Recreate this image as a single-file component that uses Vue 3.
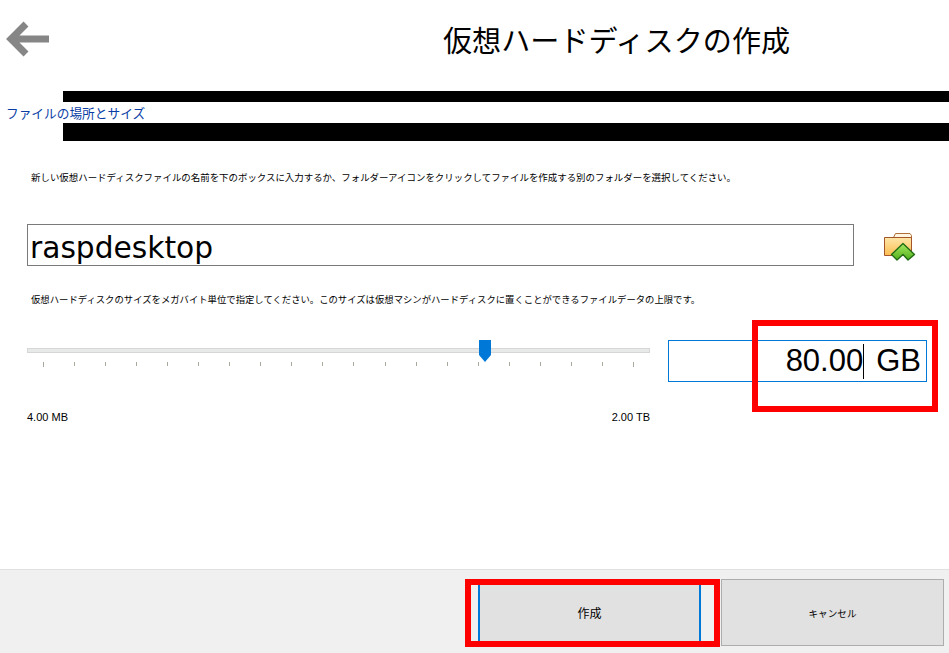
<template>
  <div class="page">
    <header class="head">
      <svg class="back" width="44" height="36" viewBox="0 0 44 36">
        <path d="M20 3 L5 18 L20 33 M6 18 H43" fill="none" stroke="#868686" stroke-width="7"/>
      </svg>
      <h1 class="title">仮想ハードディスクの作成</h1>
    </header>

    <section class="band">
      <div class="bar bar-top"></div>
      <div class="bar-gap"></div>
      <div class="bar bar-bottom"></div>
      <span class="band-label">ファイルの場所とサイズ</span>
    </section>

    <p class="desc first">新しい仮想ハードディスクファイルの名前を下のボックスに入力するか、フォルダーアイコンをクリックしてファイルを作成する別のフォルダーを選択してください。</p>

    <div class="file-row">
      <div class="file-input">raspdesktop</div>
      <svg class="folder" width="34" height="30" viewBox="0 0 34 30">
        <defs>
          <linearGradient id="folderFill" x1="0" y1="0" x2="0" y2="1">
            <stop offset="0" stop-color="#ffe6a8"/>
            <stop offset="1" stop-color="#fbbd52"/>
          </linearGradient>
          <linearGradient id="arrowFill" x1="0" y1="0" x2="0" y2="1">
            <stop offset="0" stop-color="#a8e860"/>
            <stop offset="1" stop-color="#4fb01c"/>
          </linearGradient>
        </defs>
        <path d="M10.5 4.5 L12.5 0.5 H27 L28.5 2.5 V8 H10.5 Z" fill="#fff6e2" stroke="#b0703c"/>
        <path d="M1.5 4.5 H28.5 V22.5 H1.5 Z" fill="url(#folderFill)" stroke="#a5552a"/>
        <path d="M20 10.5 L31.5 21.5 L25 27 L20 21.5 L14 27 L8.5 21.5 Z" fill="url(#arrowFill)" stroke="#1f6a12" stroke-width="1.3" stroke-linejoin="round"/>
      </svg>
    </div>

    <p class="desc second">仮想ハードディスクのサイズをメガバイト単位で指定してください。このサイズは仮想マシンがハードディスクに置くことができるファイルデータの上限です。</p>

    <div class="size-row">
      <div class="slider">
        <div class="track"></div>
        <div class="thumb"></div>
        <div class="ticks">
          <i v-for="n in 20" :key="n" :class="{ long: n === 1 || n === 20 }"></i>
        </div>
        <div class="limits">
          <span>4.00 MB</span>
          <span>2.00 TB</span>
        </div>
      </div>
      <div class="size-input">
        <span>80.00</span><b class="caret"></b><span class="unit">GB</span>
      </div>
    </div>

    <footer class="foot">
      <button class="btn create">作成</button>
      <button class="btn cancel">キャンセル</button>
    </footer>

    <div class="mark mark-size"></div>
    <div class="mark mark-create"></div>
  </div>
</template>

<script setup>
</script>

<style>
html, body {
  margin: 0;
  background: #fff;
}
</style>

<style scoped>
.page {
  position: relative;
  width: 949px;
  height: 653px;
  overflow: hidden;
  display: flex;
  flex-direction: column;
  background: #fff;
  color: #000;
  font-family: "Noto Sans CJK JP", "Liberation Sans", sans-serif;
}

.head {
  height: 91px;
  position: relative;
}
.back {
  display: block;
  margin: 21px 0 0 6px;
}
.title {
  position: absolute;
  left: 443px;
  top: 17px;
  margin: 0;
  font-size: 29.1px;
  line-height: 44px;
  font-weight: 400;
  white-space: nowrap;
}

.band {
  position: relative;
  margin-left: 63px;
}
.bar {
  background: #000;
}
.bar-top {
  height: 11px;
}
.bar-gap {
  height: 21px;
}
.bar-bottom {
  height: 18px;
}
.band-label {
  position: absolute;
  left: -57px;
  top: 12px;
  font-size: 12.7px;
  line-height: 20px;
  color: #0a3ea5;
  white-space: nowrap;
}

.desc {
  margin: 0 0 0 31px;
  font-size: 9.45px;
  line-height: 14px;
  white-space: nowrap;
}
.first {
  margin-top: 29px;
}
.second {
  margin-top: 26px;
  font-size: 9.36px;
}

.file-row {
  display: flex;
  align-items: flex-start;
  margin: 40px 0 0 27px;
}
.file-input {
  box-sizing: border-box;
  width: 827px;
  height: 42px;
  padding-left: 2px;
  border: 1px solid #7a7a7a;
  font-family: "DejaVu Sans", sans-serif;
  font-size: 29.7px;
  line-height: 45px;
}
.folder {
  margin: 9px 0 0 29px;
}

.size-row {
  display: flex;
  align-items: flex-start;
  margin: 34px 0 0 27px;
}
.slider {
  position: relative;
  width: 623px;
  height: 90px;
}
.track {
  box-sizing: border-box;
  height: 5px;
  margin-top: 8px;
  background: #e7eae8;
  border: 1px solid #d6d6d6;
}
.thumb {
  position: absolute;
  left: 452px;
  top: 0;
  width: 12px;
  height: 22px;
  background: #0078d7;
  clip-path: polygon(0 0, 100% 0, 100% 68%, 50% 100%, 0 68%);
}
.ticks {
  display: flex;
  justify-content: space-between;
  margin: 9px 16px 0;
}
.ticks i {
  width: 1px;
  height: 4px;
  background: #a8a89c;
}
.ticks i.long {
  height: 5px;
}
.limits {
  display: flex;
  justify-content: space-between;
  margin-top: 43px;
  font-family: "Liberation Sans", sans-serif;
  font-size: 11px;
  line-height: 14px;
}

.size-input {
  box-sizing: border-box;
  display: flex;
  align-items: center;
  justify-content: flex-end;
  width: 259px;
  height: 42px;
  margin-left: 18px;
  padding-right: 5px;
  border: 1px solid #0078d7;
  font-family: "Liberation Sans", sans-serif;
  font-size: 31px;
}
.caret {
  width: 1px;
  height: 35px;
  background: #000;
}
.unit {
  margin-left: 12px;
}

.foot {
  box-sizing: border-box;
  flex: none;
  height: 84px;
  margin-top: auto;
  display: flex;
  justify-content: flex-end;
  gap: 7px;
  padding: 9px 5px 0 0;
  background: #f0f0f0;
  border-top: 1px solid #e0e0e0;
}
.btn {
  box-sizing: border-box;
  height: 67px;
  padding: 0;
  background: #e1e1e1;
  font-family: inherit;
  font-size: 9.6px;
  color: #000;
}
.create {
  width: 223px;
  margin-right: 13px;
  border: 0;
  border-left: 2px solid #0078d7;
  border-right: 2px solid #0078d7;
  font-size: 12px;
}
.cancel {
  width: 223px;
  border: 1px solid #adadad;
}

.mark {
  position: absolute;
  box-sizing: border-box;
  border: 6px solid #f00;
  pointer-events: none;
}
.mark-size {
  left: 752px;
  top: 320px;
  width: 186px;
  height: 92px;
}
.mark-create {
  left: 465px;
  top: 579px;
  width: 255px;
  height: 68px;
}
</style>
